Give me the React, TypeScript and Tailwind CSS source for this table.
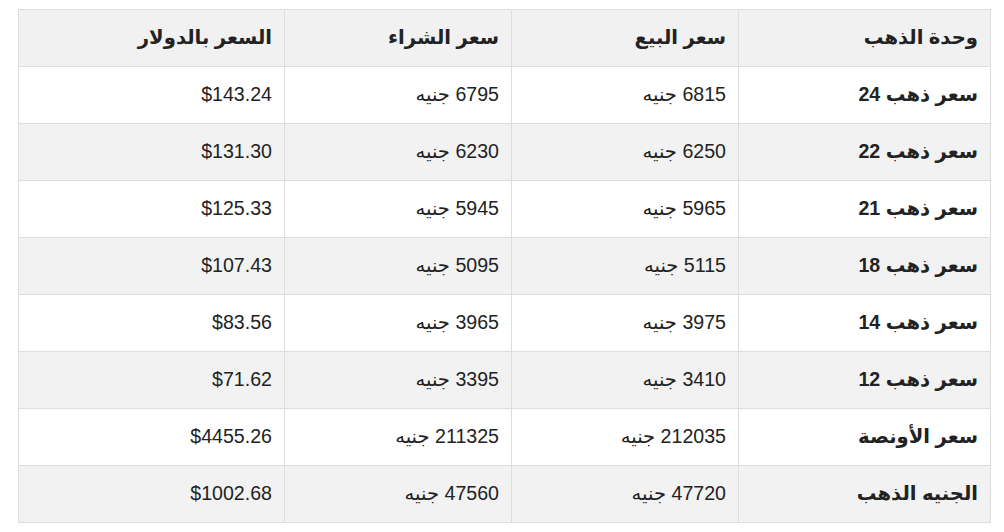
import React from "react";

const rows: [string, string, string, string][] = [
  ["سعر ذهب 24", "6815 جنيه", "6795 جنيه", "$143.24"],
  ["سعر ذهب 22", "6250 جنيه", "6230 جنيه", "$131.30"],
  ["سعر ذهب 21", "5965 جنيه", "5945 جنيه", "$125.33"],
  ["سعر ذهب 18", "5115 جنيه", "5095 جنيه", "$107.43"],
  ["سعر ذهب 14", "3975 جنيه", "3965 جنيه", "$83.56"],
  ["سعر ذهب 12", "3410 جنيه", "3395 جنيه", "$71.62"],
  ["سعر الأونصة", "212035 جنيه", "211325 جنيه", "$4455.26"],
  ["الجنيه الذهب", "47720 جنيه", "47560 جنيه", "$1002.68"],
];

const App: React.FC = () => {
  return (
    <div className="w-[1004px] h-[532px] bg-white pt-[9px] pl-[18px] font-['Liberation_Sans','DejaVu_Sans',sans-serif] text-[#222] text-[19.6px]">
      <table dir="rtl" className="w-[972px] border-collapse table-fixed">
        <colgroup>
          <col className="w-[252px]" />
          <col className="w-[227px]" />
          <col className="w-[227px]" />
          <col className="w-[266px]" />
        </colgroup>
        <thead>
          <tr className="bg-[#f1f1f1] h-[57px]">
            {["وحدة الذهب", "سعر البيع", "سعر الشراء", "السعر بالدولار"].map((h) => (
              <th
                key={h}
                className="border border-[#ddd] px-3 text-right font-bold"
              >
                {h}
              </th>
            ))}
          </tr>
        </thead>
        <tbody>
          {rows.map((r, i) => (
            <tr
              key={r[0]}
              className={`h-[57px] ${i % 2 === 1 ? "bg-[#f2f2f2]" : "bg-white"}`}
            >
              <td className="border border-[#ddd] px-3 text-right font-bold">{r[0]}</td>
              <td className="border border-[#ddd] px-3 text-right">{r[1]}</td>
              <td className="border border-[#ddd] px-3 text-right">{r[2]}</td>
              <td className="border border-[#ddd] px-3 text-right">{r[3]}</td>
            </tr>
          ))}
        </tbody>
      </table>
    </div>
  );
};

export default App;
